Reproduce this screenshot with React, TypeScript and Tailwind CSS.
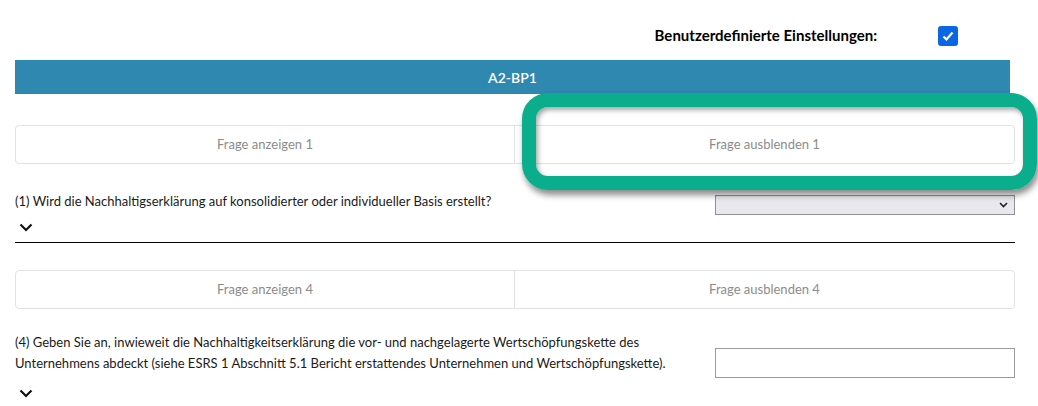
import React from "react";

function Chevron() {
  return (
    <svg width="14" height="9" viewBox="0 0 14 9" className="ml-[4px]">
      <polyline points="1.5,1.5 7,7 12.5,1.5" fill="none" stroke="#111" strokeWidth="2.2" />
    </svg>
  );
}

function ToggleGroup({ n }: { n: number }) {
  return (
    <div className="grid grid-cols-2 w-[1000px] h-[39px] border border-[#e2e2e2] rounded-[4px] text-[13px] text-[#8c8c8c]">
      <div className="flex items-center justify-center border-r border-[#e2e2e2]">Frage anzeigen {n}</div>
      <div className="flex items-center justify-center">Frage ausblenden {n}</div>
    </div>
  );
}

export default function App() {
  return (
    <div className="relative w-[1038px] h-[406px] bg-white overflow-hidden font-['Lato',sans-serif] text-[#1a1a1a]">
      <div className="flex items-center justify-end pr-[80px] pt-[25px] gap-[61px] h-[46px]">
        <span className="font-bold text-[15px] text-black">Benutzerdefinierte Einstellungen:</span>
        <span className="w-[20px] h-[20px] rounded-[3px] bg-[#0b66e4] flex items-center justify-center">
          <svg width="14" height="14" viewBox="0 0 14 14">
            <polyline points="2.5,7.5 5.5,10.5 11.5,3.5" fill="none" stroke="#fff" strokeWidth="2.2" />
          </svg>
        </span>
      </div>

      <div className="ml-[15px] mt-[14px] w-[995px] h-[34px] bg-[#2e88b0] flex items-center justify-center text-white text-[14px] font-semibold">
        A2-BP1
      </div>

      <div className="ml-[15px] mt-[31px]">
        <ToggleGroup n={1} />
      </div>

      <div className="ml-[15px] w-[1000px] mt-[28px] flex justify-between items-start">
        <p className="text-[13px] leading-[20px] mt-[-1px]">
          (1) Wird die Nachhaltigserklärung auf konsolidierter oder individueller Basis erstellt?
        </p>
        <div className="w-[300px] h-[20px] mt-[3px] bg-[#e9e9ed] border border-[#8f8f9d] flex items-center justify-end pr-[6px]">
          <svg width="9" height="6" viewBox="0 0 9 6">
            <polyline points="1,1 4.5,4.5 8,1" fill="none" stroke="#222" strokeWidth="1.6" />
          </svg>
        </div>
      </div>
      <div className="ml-[15px] mt-[7px] h-[10px] flex items-center">
        <Chevron />
      </div>
      <div className="ml-[15px] mt-[10px] w-[1000px] border-t border-black" />

      <div className="ml-[15px] mt-[27px]">
        <ToggleGroup n={4} />
      </div>

      <div className="ml-[15px] w-[1000px] mt-[23px] flex justify-between items-start">
        <p className="text-[13px] leading-[21px] w-[690px]">
          (4) Geben Sie an, inwieweit die Nachhaltigkeitserklärung die vor- und nachgelagerte Wertschöpfungskette des
          Unternehmens abdeckt (siehe ESRS 1 Abschnitt 5.1 Bericht erstattendes Unternehmen und Wertschöpfungskette).
        </p>
        <div className="w-[300px] h-[30px] mt-[16px] border border-[#9a9a9a] bg-white" />
      </div>
      <div className="ml-[15px] mt-[10px] h-[10px] flex items-center">
        <Chevron />
      </div>

      <div className="absolute left-[522px] top-[93px] w-[515px] h-[97px] border-[14px] border-[#0aae8c] rounded-[26px] shadow-[2px_5px_6px_rgba(0,0,0,0.45),inset_2px_3px_5px_rgba(0,0,0,0.35)]" />
    </div>
  );
}
